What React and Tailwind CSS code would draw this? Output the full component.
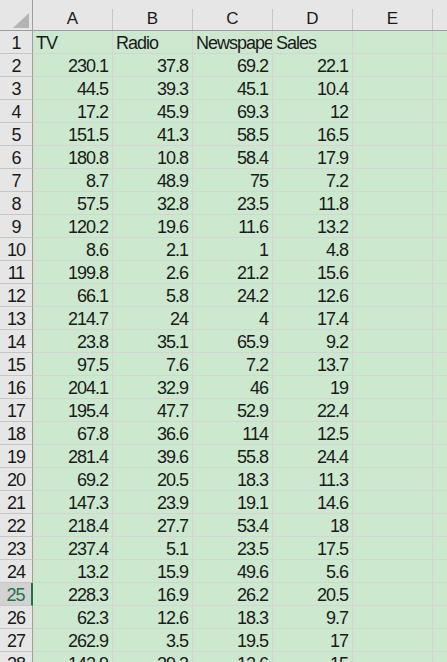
const rows = [
  ['TV', 'Radio', 'Newspaper', 'Sales'],
  ['230.1', '37.8', '69.2', '22.1'],
  ['44.5', '39.3', '45.1', '10.4'],
  ['17.2', '45.9', '69.3', '12'],
  ['151.5', '41.3', '58.5', '16.5'],
  ['180.8', '10.8', '58.4', '17.9'],
  ['8.7', '48.9', '75', '7.2'],
  ['57.5', '32.8', '23.5', '11.8'],
  ['120.2', '19.6', '11.6', '13.2'],
  ['8.6', '2.1', '1', '4.8'],
  ['199.8', '2.6', '21.2', '15.6'],
  ['66.1', '5.8', '24.2', '12.6'],
  ['214.7', '24', '4', '17.4'],
  ['23.8', '35.1', '65.9', '9.2'],
  ['97.5', '7.6', '7.2', '13.7'],
  ['204.1', '32.9', '46', '19'],
  ['195.4', '47.7', '52.9', '22.4'],
  ['67.8', '36.6', '114', '12.5'],
  ['281.4', '39.6', '55.8', '24.4'],
  ['69.2', '20.5', '18.3', '11.3'],
  ['147.3', '23.9', '19.1', '14.6'],
  ['218.4', '27.7', '53.4', '18'],
  ['237.4', '5.1', '23.5', '17.5'],
  ['13.2', '15.9', '49.6', '5.6'],
  ['228.3', '16.9', '26.2', '20.5'],
  ['62.3', '12.6', '18.3', '9.7'],
  ['262.9', '3.5', '19.5', '17'],
  ['142.9', '29.3', '12.6', '15'],
];

const cols = ['A', 'B', 'C', 'D', 'E'];
const font = { fontFamily: '"Liberation Sans", Arial, sans-serif' };

export default function App() {
  return (
    <div className="w-[447px] h-[662px] overflow-hidden bg-[#cce8cf] text-[#1a1a1a] select-none" style={font}>
      {/* column headers */}
      <div className="flex h-[31px] bg-[#e6e6e6] border-b border-[#9e9e9e]">
        <div className="w-[33px] shrink-0 h-full flex items-end justify-end pr-[2px] pb-[2px] border-r border-[#9e9e9e]">
          <svg width="17" height="15" viewBox="0 0 17 15">
            <polygon points="16,0 16,15 0,15" fill="#b4b4b4" />
          </svg>
        </div>
        {cols.map((c) => (
          <div key={c} className="w-[80px] shrink-0 h-full pt-[9px]">
            <div className="h-full border-r border-[#c6c6c6] flex items-center justify-center text-[17px] leading-none pb-[2px]">
              {c}
            </div>
          </div>
        ))}
        <div className="flex-1" />
      </div>
      {rows.map((r, i) => {
        const sel = i === 24;
        return (
          <div key={i} className="flex h-[23px]">
            <div
              className={`w-[33px] shrink-0 h-full flex items-center justify-center text-[18px] tracking-[-1px] pt-[2px] border-b ${
                sel
                  ? 'bg-[#d2d2d2] text-[#217346] border-r-2 border-r-[#217346] border-b-[#c6c6c6]'
                  : 'bg-[#e6e6e6] border-r border-r-[#9e9e9e] border-b-[#c6c6c6]'
              }`}
            >
              {i + 1}
            </div>
            {cols.map((c, j) => {
              const v = r[j];
              const isText = i === 0;
              return (
                <div
                  key={c}
                  className={`w-[80px] shrink-0 h-full border-r border-b border-[#d4d4d4] overflow-hidden whitespace-nowrap flex items-center pt-[3px] text-[18px] tracking-[-1px] ${
                    isText ? 'justify-start pl-[3px]' : 'justify-end pr-[4px]'
                  }`}
                >
                  {v}
                </div>
              );
            })}
            <div className="flex-1 border-b border-[#d4d4d4]" />
          </div>
        );
      })}
    </div>
  );
}
